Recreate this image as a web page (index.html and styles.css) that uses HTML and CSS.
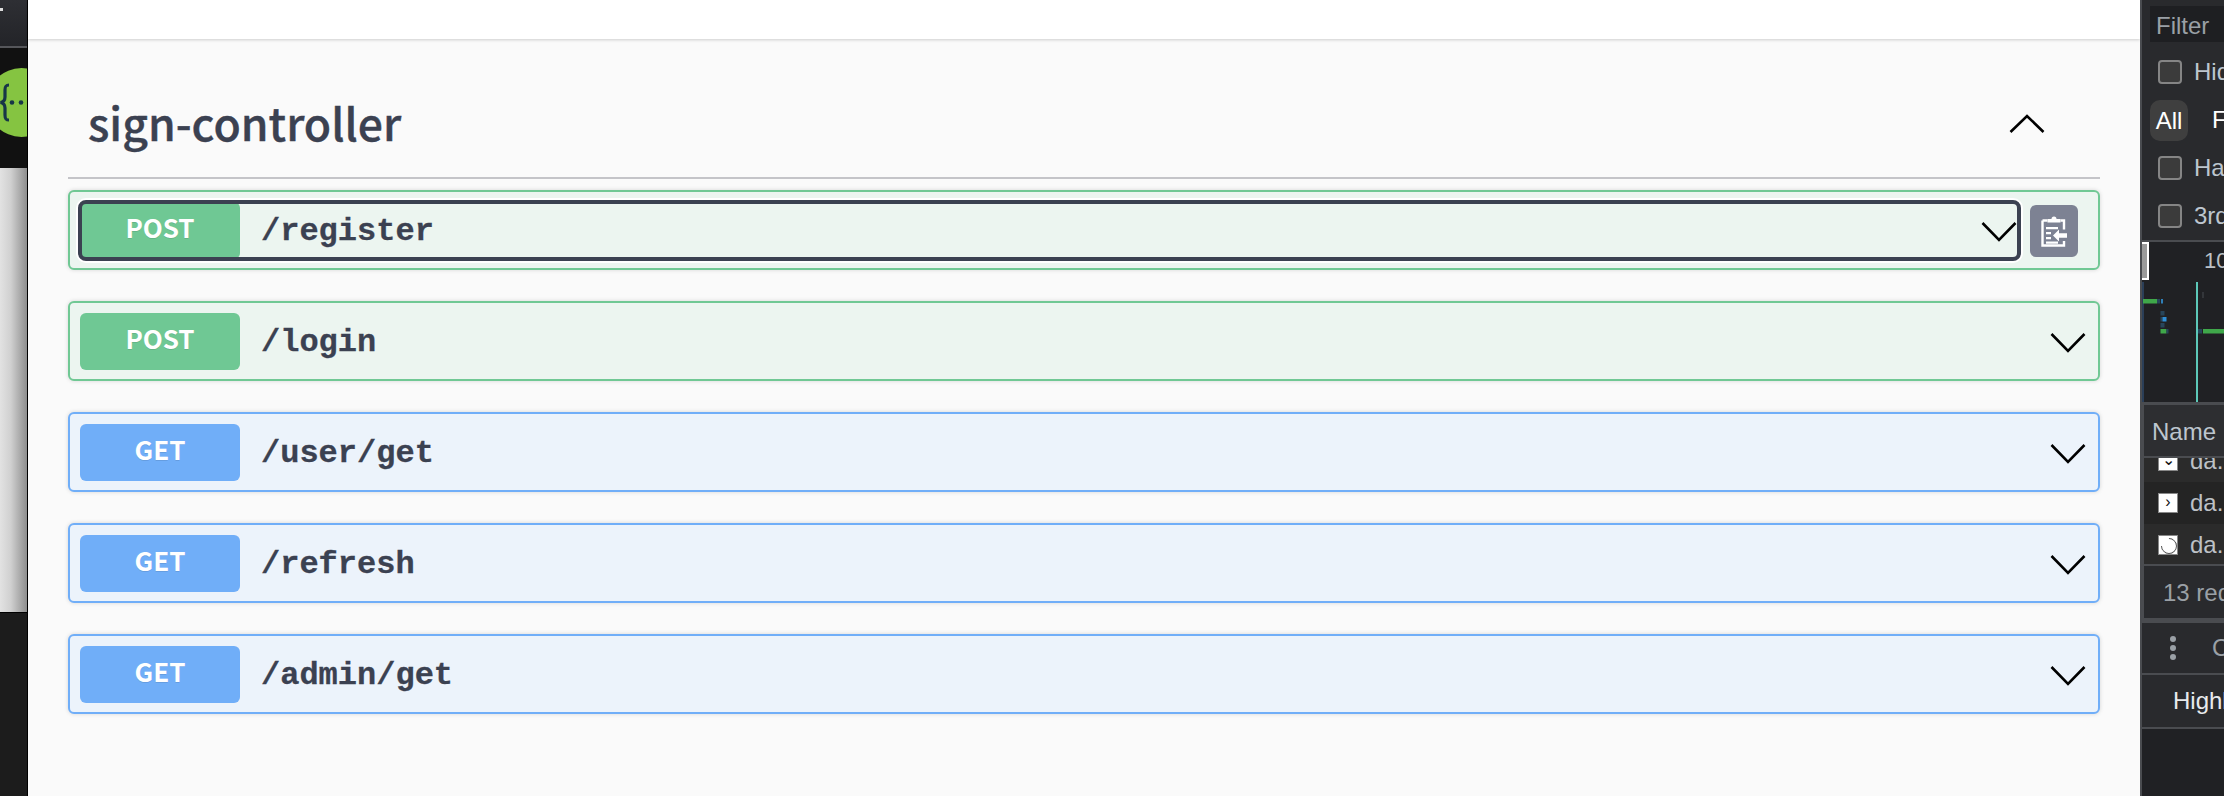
FILE: index.html
```html
<!DOCTYPE html>
<html lang="en">
  <head>
    <meta charset="UTF-8" />
    <meta name="viewport" content="width=device-width, initial-scale=1.0" />
    <title>Swagger UI</title>
    <link rel="stylesheet" href="styles.css">
  </head>
  <body>
    <aside class="side">
      <div class="side-top"><span class="side-dot"></span></div>
      <div class="side-logo">
        <svg class="logo" width="69" height="69" viewBox="0 0 69 69">
          <circle cx="34.5" cy="34.5" r="34.500" fill="#85c441" />
          <path d="M22 17 c-3.500 0 -4 1.500 -4 5 v7 c0 3 -1.500 5 -4.500 5.500 c3 .5 4.500 2.500 4.500 5.500 v7 c0 3.500 .5 5 4 5" fill="none" stroke="#173647" stroke-width="3.200" />
          <circle cx="25" cy="34.500" r="2.300" fill="#173647" />
          <circle cx="34" cy="34.500" r="2.300" fill="#173647" />
        </svg>
      </div>
      <div class="side-page"></div>
      <div class="side-bottom"></div>
    </aside>

    <main class="main">
      <div class="topbar"></div>
      <section class="tag-section">
        <div class="tag-head">
          <h3 class="tag-title">sign-controller</h3>
          <svg class="tag-arrow" width="36" height="20" viewBox="0 0 36 20">
            <polyline points="1.5,18 18,2 34.5,18" fill="none" stroke="#000" stroke-width="2.6" />
          </svg>
        </div>

        <div class="opblock opblock-post">
          <div class="summary summary-focus">
            <span class="method">POST</span>
            <span class="path">/register</span>
            <svg class="arrow" width="36" height="22" viewBox="0 0 36 22">
              <polyline points="1.5,2 18,19 34.5,2" fill="none" stroke="#000" stroke-width="2.6" />
            </svg>
          </div>
          <button class="copy">
            <svg width="26" height="32" viewBox="0 0 26 32">
              <path d="M1.5 5.5h5M19.500 5.500h3.500v9M23 26v4.500h-21.500v-25" fill="none" stroke="#fff" stroke-width="2.400" />
              <path d="M6.500 7.500v-3.500h4a2.500 2.500 0 0 1 5 0h4v3.500z" fill="#fff" />
              <path d="M5 12h12v2.200h-12zM5 17h5v2.200h-5zM5 22h5v2.200h-5zM5 26.500h12v2.200h-12z" fill="#fff" />
              <path d="M12 20.500l6 -6v3.800h8v4.400h-8v3.800z" fill="#fff" />
            </svg>
          </button>
        </div>

        <div class="opblock opblock-post">
          <div class="summary">
            <span class="method">POST</span>
            <span class="path">/login</span>
            <svg class="arrow" width="36" height="22" viewBox="0 0 36 22">
              <polyline points="1.5,2 18,19 34.5,2" fill="none" stroke="#000" stroke-width="2.6" />
            </svg>
          </div>
        </div>

        <div class="opblock opblock-get">
          <div class="summary">
            <span class="method">GET</span>
            <span class="path">/user/get</span>
            <svg class="arrow" width="36" height="22" viewBox="0 0 36 22">
              <polyline points="1.5,2 18,19 34.5,2" fill="none" stroke="#000" stroke-width="2.6" />
            </svg>
          </div>
        </div>

        <div class="opblock opblock-get">
          <div class="summary">
            <span class="method">GET</span>
            <span class="path">/refresh</span>
            <svg class="arrow" width="36" height="22" viewBox="0 0 36 22">
              <polyline points="1.5,2 18,19 34.5,2" fill="none" stroke="#000" stroke-width="2.6" />
            </svg>
          </div>
        </div>

        <div class="opblock opblock-get">
          <div class="summary">
            <span class="method">GET</span>
            <span class="path">/admin/get</span>
            <svg class="arrow" width="36" height="22" viewBox="0 0 36 22">
              <polyline points="1.5,2 18,19 34.5,2" fill="none" stroke="#000" stroke-width="2.6" />
            </svg>
          </div>
        </div>
      </section>
    </main>

    <aside class="devtools">
      <div class="dt-filter"><span class="dt-filter-box">Filter</span></div>
      <label class="dt-check"><span class="box"></span>Hide data URLs</label>
      <div class="dt-types"><span class="pill">All</span><span class="dt-type">Fetch/XHR</span></div>
      <label class="dt-check"><span class="box"></span>Has blocked cookies</label>
      <label class="dt-check"><span class="box"></span>3rd-party requests</label>

      <div class="dt-timeline">
        <span class="thumb"></span>
        <span class="tick">10 ms</span>
        <svg class="bars" width="82" height="120" viewBox="0 0 82 120">
          <rect x="0" y="0" width="2" height="120" fill="#2b3f58" />
          <rect x="54" y="0" width="2" height="120" fill="#5cc8b8" />
          <rect x="60" y="10" width="2" height="6" fill="#33363a" />
          <rect x="1" y="17" width="14" height="4.500" fill="#3fa74a" />
          <rect x="15" y="17" width="3" height="4.500" fill="#27455a" />
          <rect x="19" y="17" width="2" height="4.500" fill="#2e7fb8" />
          <rect x="18.500" y="29" width="4" height="4.500" fill="#27455a" />
          <rect x="18.500" y="35" width="2" height="4.500" fill="#27455a" />
          <rect x="20.500" y="35" width="4" height="4.500" fill="#2e8fd8" />
          <rect x="18.500" y="41" width="4" height="4.500" fill="#27455a" />
          <rect x="18.500" y="47" width="6" height="4.500" fill="#3fa74a" />
          <rect x="24.500" y="47" width="2" height="4.500" fill="#27455a" />
          <rect x="56" y="47" width="4" height="4.500" fill="#27455a" />
          <rect x="61" y="47" width="21" height="4.500" fill="#3fa74a" />
        </svg>
      </div>

      <div class="dt-name">Name</div>
      <div class="dt-rows">
        <div class="dt-row dt-row-cut"><span class="file-icon">⌄</span>da...</div>
        <div class="dt-row dt-row-alt"><span class="file-icon">›</span>da...</div>
        <div class="dt-row"><span class="file-icon file-icon-load"></span>da...</div>
      </div>
      <div class="dt-status">13 requests</div>
      <div class="dt-console">
        <span class="dots"><i></i><i></i><i></i></span>
        <span class="dt-console-label">Console</span>
      </div>
      <div class="dt-high">Highlights</div>
      <div class="dt-rest"></div>
    </aside>
  </body>
</html>
```

FILE: styles.css
```css
* {
  box-sizing: border-box;
}
html,
body {
  margin: 0;
  height: 796px;
  overflow: hidden;
}
body {
  display: flex;
  font-family: "Noto Sans CJK KR", "Noto Sans", sans-serif;
  background: #fafafa;
}

/* left window edge */
.side {
  width: 28px;
  flex: none;
  display: flex;
  flex-direction: column;
  border-right: 1px solid #000;
  overflow: hidden;
}
.side-top {
  height: 48px;
  background: linear-gradient(#2e2f34, #232428);
  border-bottom: 2px solid #55565a;
  padding: 8px 0 0;
}
.side-dot {
  display: block;
  width: 3px;
  height: 3px;
  background: #ddd;
}
.side-logo {
  height: 120px;
  background: #111;
  padding: 20px 0 0;
}
.logo {
  display: block;
  margin-left: -13px;
}
.side-page {
  height: 444px;
  background: linear-gradient(90deg, #e2e2e2, #d0d0d0 40%, #8e8e8e);
}
.side-bottom {
  flex: 1;
  background: #1c1c1c;
  border-top: 1px solid #000;
}

/* swagger */
.main {
  width: 2112px;
  flex: none;
  display: flex;
  flex-direction: column;
}
.topbar {
  height: 39px;
  background: #fff;
  box-shadow: 0 1px 3px rgba(0, 0, 0, 0.18);
}
.tag-section {
  flex: 1;
  padding: 0 40px;
}
.tag-head {
  height: 140px;
  display: flex;
  align-items: center;
  justify-content: space-between;
  padding: 28px 55px 0 20px;
  border-bottom: 2px solid #c4c4c8;
}
.tag-title {
  margin: 0;
  font-size: 44.500px;
  font-weight: 500;
  line-height: 60px;
  color: #3b4151;
  -webkit-text-stroke: 0.4px #3b4151;
}
.tag-arrow {
  margin-top: 3px;
}
.opblock {
  display: flex;
  align-items: flex-start;
  height: 80px;
  margin: 11px 0 31px;
  padding: 10px;
  border: 2px solid #6ec897;
  border-radius: 6px;
  box-shadow: 0 0 4px rgba(0, 0, 0, 0.15);
}
.opblock-post {
  background: #ecf5f0;
  border-color: #70c894;
}
.opblock-get {
  background: #ecf3fb;
  border-color: #70aef8;
}
.summary {
  flex: 1;
  min-width: 0;
  height: 57px;
  display: flex;
  align-items: center;
}
.summary-focus {
  outline: 4px solid #3b4151;
  outline-offset: -2px;
  border-radius: 6px;
  box-shadow: 0 0 0 4px #fff;
}
.method {
  width: 160px;
  height: 57px;
  flex: none;
  border-radius: 6px;
  color: #fff;
  font-size: 26px;
  font-weight: 700;
  line-height: 50px;
  text-align: center;
  text-shadow: 0 1px 0 rgba(0, 0, 0, 0.1);
}
.opblock-post .method {
  background: #6fc894;
}
.opblock-get .method {
  background: #70aef8;
}
.path {
  flex: 1;
  padding: 1px 0 0 21px;
  font-family: "Liberation Mono", monospace;
  font-size: 32px;
  font-weight: 700;
  color: #3b4151;
  -webkit-text-stroke: 0.3px #3b4151;
}
.arrow {
  flex: none;
  margin: 2px 2px 0 0;
}
.copy {
  width: 48px;
  height: 52px;
  flex: none;
  margin: 3px 10px 0 11px;
  padding: 0;
  display: flex;
  align-items: center;
  justify-content: center;
  border: none;
  border-radius: 6px;
  background: #7d8293;
}

/* devtools */
.devtools {
  flex: 1;
  min-width: 0;
  display: flex;
  flex-direction: column;
  background: #292a2d;
  border-left: 2px solid #4a4c50;
  color: #bdc6cf;
  font-family: "Liberation Sans", sans-serif;
  font-size: 24px;
  white-space: nowrap;
  overflow: hidden;
}
.dt-filter {
  height: 48px;
  flex: none;
  padding: 6px 0 0 8px;
}
.dt-filter-box {
  display: block;
  height: 36px;
  padding-left: 6px;
  line-height: 39px;
  background: #1e1f22;
  color: #9aa0a6;
}
.dt-check {
  height: 48px;
  flex: none;
  display: flex;
  align-items: center;
  padding-left: 16px;
}
.box {
  width: 24px;
  height: 24px;
  flex: none;
  margin-right: 12px;
  background: #3b3b3b;
  border: 2px solid #858585;
  border-radius: 4px;
}
.dt-types {
  height: 48px;
  flex: none;
  display: flex;
  align-items: center;
  padding-left: 8px;
  color: #fff;
}
.pill {
  width: 38px;
  height: 41px;
  flex: none;
  margin-right: 24px;
  background: #3f3f3f;
  border-radius: 10px;
  line-height: 41px;
  text-align: center;
}
.dt-timeline {
  height: 165px;
  flex: none;
  position: relative;
  background: #202124;
  border-top: 2px solid #4a4c50;
  border-bottom: 3px solid #4a4c50;
  padding: 6px 0 0 62px;
  color: #bdc1c6;
  font-size: 22px;
}
.thumb {
  position: absolute;
  left: 0;
  top: 0;
  width: 7px;
  height: 38px;
  background: #9a9a9a;
  border: 2px solid #fff;
  border-left: none;
}
.bars {
  position: absolute;
  left: 0;
  top: 40px;
}
.dt-name {
  height: 53px;
  flex: none;
  padding: 13px 0 0 8px;
  background: #2d2e31;
  border-left: 2px solid #4a4c50;
  border-bottom: 2px solid #4a4c50;
}
.dt-rows {
  height: 108px;
  flex: none;
  overflow: hidden;
  color: #bdc1c6;
  border-left: 2px solid #4a4c50;
  border-bottom: 2px solid #4a4c50;
}
.dt-row {
  height: 42px;
  display: flex;
  align-items: center;
  padding-left: 14px;
  background: #2b2b2b;
}
.dt-row-cut {
  margin-top: -18px;
}
.dt-row-alt {
  background: #242424;
}
.file-icon {
  width: 20px;
  height: 20px;
  flex: none;
  margin-right: 12px;
  background: #fff;
  border: 1px solid #888;
  color: #111;
  font-size: 16px;
  line-height: 16px;
  text-align: center;
}
.file-icon-load {
  position: relative;
}
.file-icon-load::after {
  content: "";
  position: absolute;
  left: 2px;
  top: 2px;
  width: 14px;
  height: 14px;
  border: 1.500px solid #555;
  border-top-color: transparent;
  border-radius: 50%;
  transform: rotate(-45deg);
}
.dt-status {
  height: 57px;
  flex: none;
  padding: 13px 0 0 19px;
  color: #9aa0a6;
  border-left: 2px solid #4a4c50;
  border-bottom: 5px solid #4a4c50;
}
.dt-console {
  height: 52px;
  flex: none;
  display: flex;
  align-items: center;
  padding-left: 28px;
  background: #292a2d;
  border-bottom: 2px solid #4a4c50;
  color: #9aa0a6;
}
.dots {
  width: 6px;
  flex: none;
  display: flex;
  flex-direction: column;
  gap: 3px;
  margin-right: 36px;
}
.dots i {
  height: 6px;
  border-radius: 50%;
  background: #9aa0a6;
}
.dt-high {
  height: 54px;
  flex: none;
  padding: 12px 0 0 31px;
  background: #292a2d;
  border-bottom: 2px solid #4a4c50;
  color: #e8eaed;
}
.dt-rest {
  flex: 1;
  background: #202124;
}
```
